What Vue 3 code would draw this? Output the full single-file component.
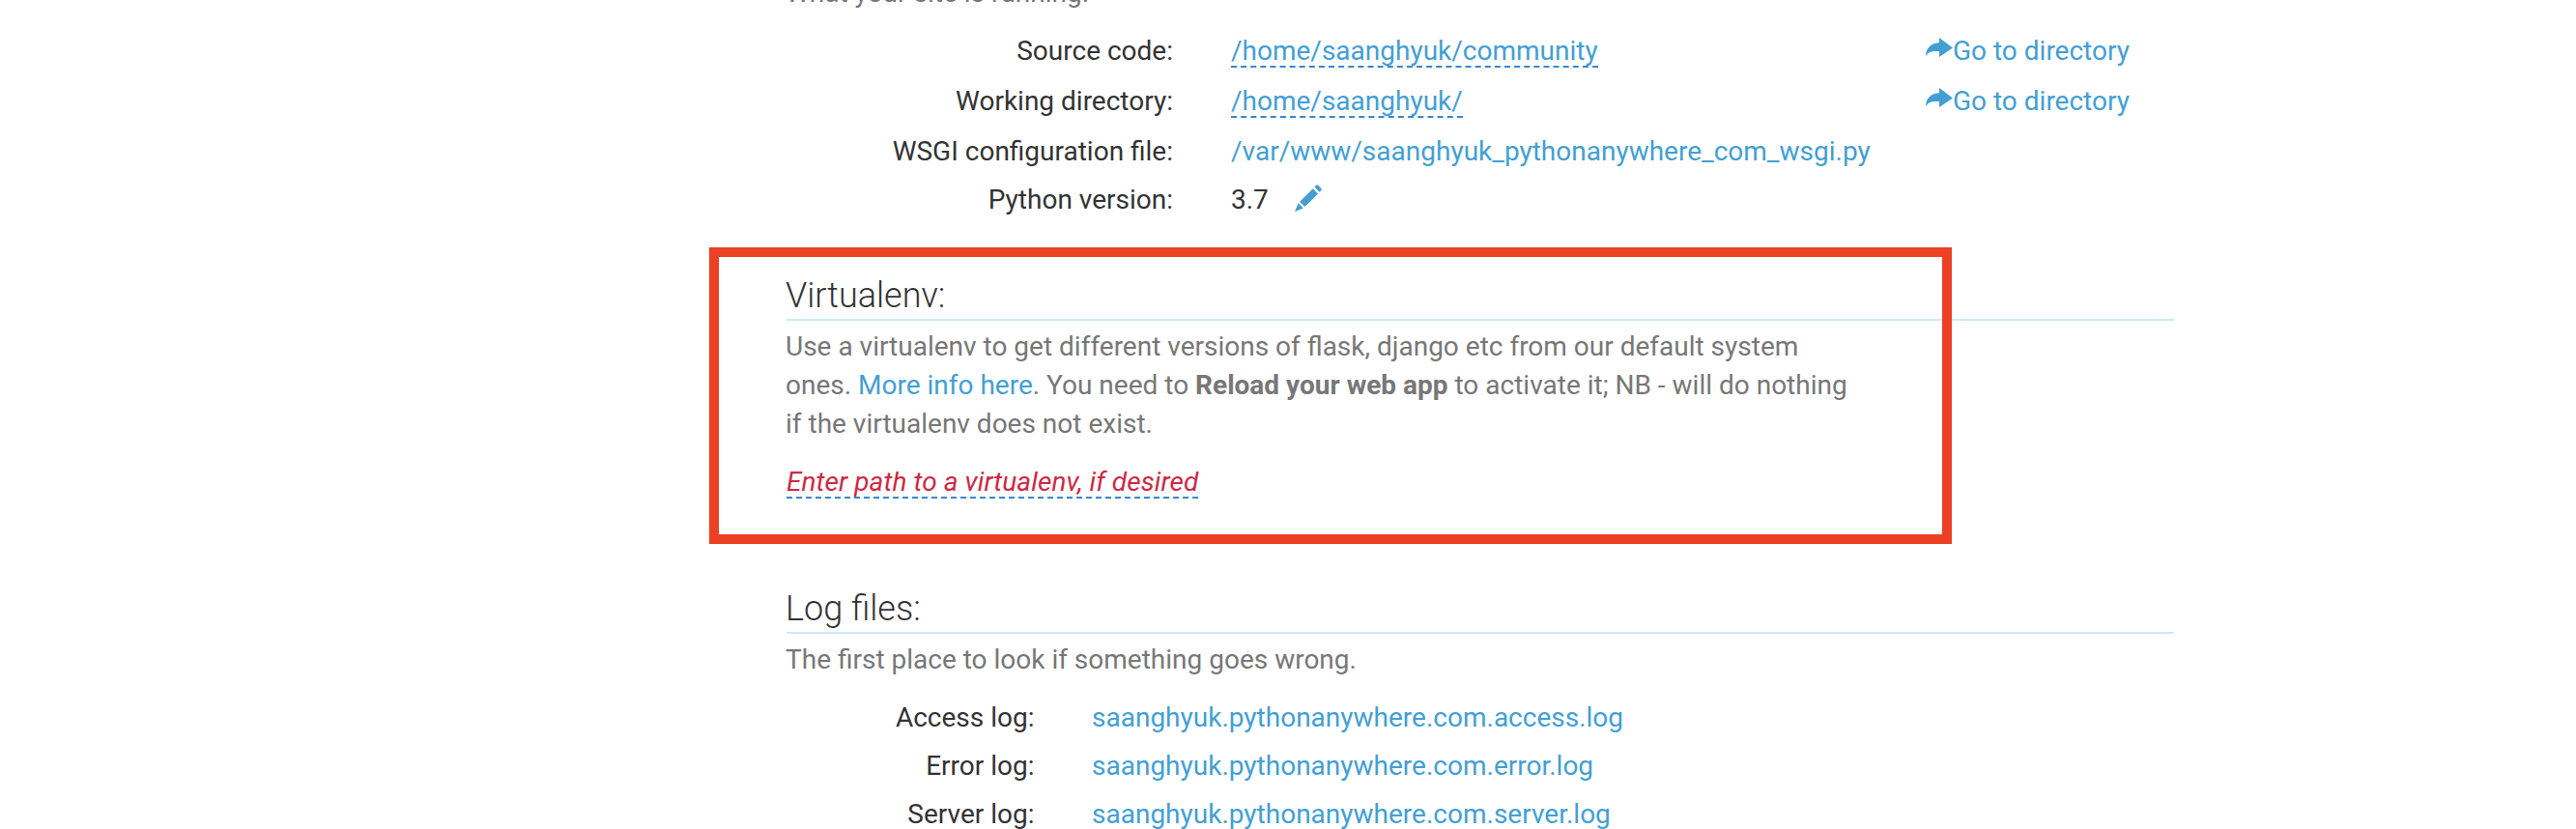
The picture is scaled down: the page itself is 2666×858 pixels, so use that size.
<script setup>
const codeRows = [
  { label: 'Source code:', value: '/home/saanghyuk/community', kind: 'editable', go: true },
  { label: 'Working directory:', value: '/home/saanghyuk/', kind: 'editable', go: true },
  { label: 'WSGI configuration file:', value: '/var/www/saanghyuk_pythonanywhere_com_wsgi.py', kind: 'file' },
  { label: 'Python version:', value: '3.7', kind: 'plain' },
]
const logs = ['access', 'error', 'server']
const title = (s) => s[0].toUpperCase() + s.slice(1)
</script>

<template>
  <main class="page">
    <section class="code">
      <p class="muted">What your site is running.</p>
      <div class="table">
        <div v-for="row in codeRows" :key="row.label" class="row" :class="row.kind">
          <span class="label">{{ row.label }}</span>
          <span class="value">
            <a v-if="row.kind !== 'plain'" class="link">{{ row.value }}</a>
            <template v-else>
              <span>{{ row.value }}</span>
              <svg class="pencil" viewBox="0 0 28 28">
                <path d="M18.8 4.2 24 9.4 10.4 23 5.2 17.8ZM20.4 2.6 22.2 .8Q23.2-.2 24.2.8L27.4 4Q28.4 5 27.4 6L25.6 7.8ZM3.7 19.3 8.9 24.5 0 28Z" />
              </svg>
            </template>
          </span>
          <a v-if="row.go" class="go"><svg class="share" viewBox="0 0 28 20"><path d="M14 0 28 10.5 14 20V14C7 13.7 3 14 .6 18.5Q0 19.3 0 17.5C1 10 6 5.6 14 5.2Z" /></svg>Go to directory</a>
        </div>
      </div>
    </section>

    <section class="virtualenv">
      <h2>Virtualenv:</h2>
      <p class="muted">
        Use a virtualenv to get different versions of flask, django etc from our default system<br>
        ones. <a class="link">More info here</a>. You need to <b>Reload your web app</b> to activate it; NB - will do nothing<br>
        if the virtualenv does not exist.
      </p>
      <a class="empty">Enter path to a virtualenv, if desired</a>
      <div class="highlight"></div>
    </section>

    <section class="logs">
      <h2>Log files:</h2>
      <p class="muted">The first place to look if something goes wrong.</p>
      <div class="table">
        <div v-for="log in logs" :key="log" class="row">
          <span class="label">{{ title(log) }} log:</span>
          <a class="link">saanghyuk.pythonanywhere.com.{{ log }}.log</a>
        </div>
      </div>
    </section>
  </main>
</template>

<style>
body { background: #fff; overflow: hidden; }
</style>

<style scoped>
.page {
  box-sizing: border-box;
  width: 2666px;
  height: 858px;
  overflow: hidden;
  padding: 0 416px 0 813px;
  font: 28px/40px Roboto, sans-serif;
  color: #333;
}
.page > section { display: flow-root; }
.code { height: 277px; margin-top: -27px; }
p { margin: 0; }
.muted { color: #777; }
.table { margin-top: 20px; }
.row {
  display: grid;
  grid-template-columns: 401px 719px 1fr;
  column-gap: 60px;
  height: 40px;
  margin-bottom: 10px;
  white-space: nowrap;
}
.row.editable { height: 42px; }
.label { text-align: right; }
.link, .go { color: #439fd3; }
.code .go { margin-left: -60px; }
.editable .link, .empty {
  display: inline-block;
  line-height: 30px;
  border-bottom: 2px dashed #3a87c8;
}
.pencil { width: 28px; height: 28px; margin-left: 27px; vertical-align: -3px; fill: #439fd3; }
.share { width: 28px; height: 20px; vertical-align: 3px; fill: #439fd3; }
.virtualenv { position: relative; height: 324px; }
h2 {
  box-sizing: border-box;
  height: 50px;
  margin: 32px 0 7px 1px;
  border-bottom: 2px solid #c8ecfc;
  font-size: 36px;
  line-height: 48px;
  font-weight: 300;
  text-indent: -1px;
}
.empty { color: #cd2945; font-style: italic; letter-spacing: .08px; margin: 25px 0 0 1px; }
.highlight {
  position: absolute;
  left: -79px;
  top: 6px;
  box-sizing: border-box;
  width: 1286px;
  height: 307px;
  border: 10px solid #ec4024;
}
.logs .row { grid-template-columns: 257.5px 1fr; column-gap: 59.5px; }
</style>
